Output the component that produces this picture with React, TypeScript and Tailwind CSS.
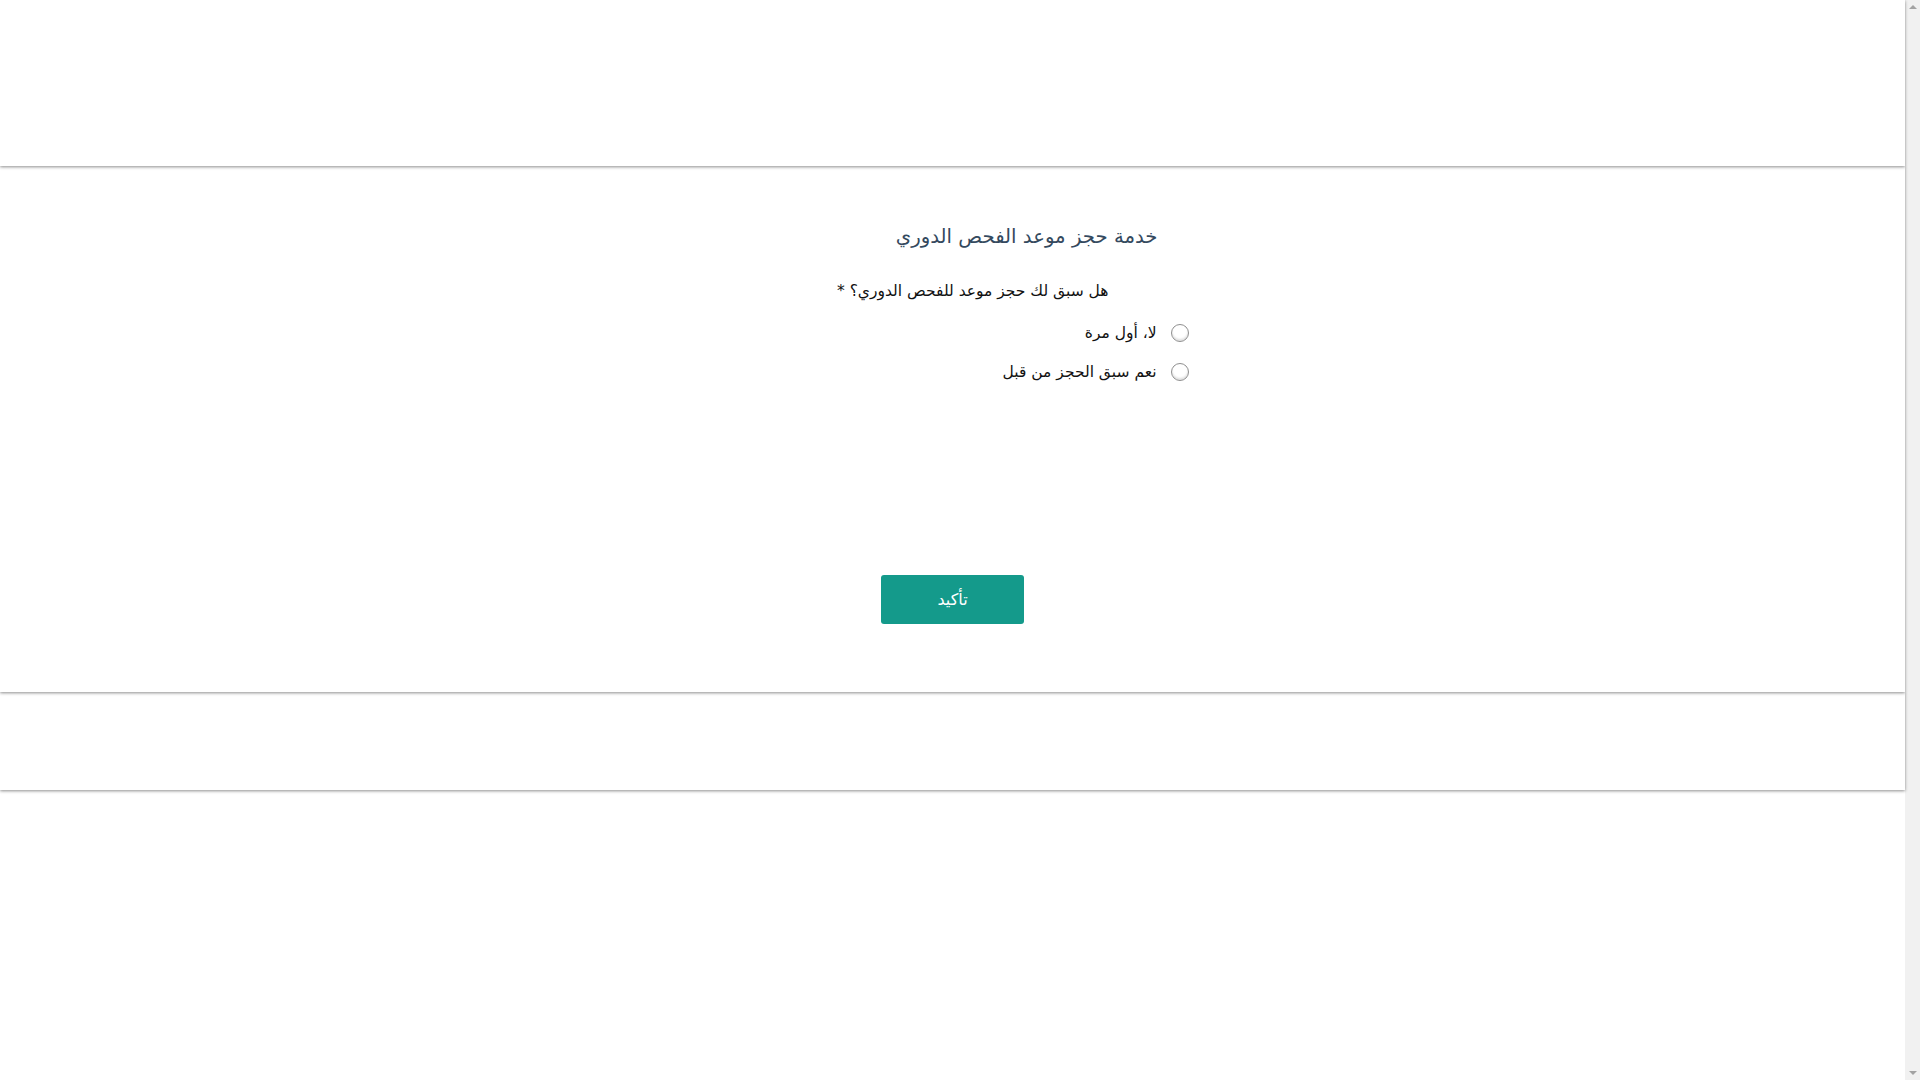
import React from "react";

function Radio() {
  return (
    <span className="inline-block w-[18px] h-[18px] rounded-full border-[1.5px] border-[#8f8f8f] bg-white shadow-[inset_0_-2px_2px_rgba(0,0,0,0.12)] shrink-0" />
  );
}

export default function App() {
  const font = { fontFamily: '"DejaVu Sans", "Noto Sans", sans-serif' };
  return (
    <div className="flex w-full h-[1080px] bg-white overflow-hidden" style={font}>
      <div className="flex-1 flex flex-col min-w-0">
        <header className="h-[166px] shrink-0 bg-white shadow-[0_1px_3px_rgba(0,0,0,0.45)] relative z-20" />
        <main className="h-[526px] shrink-0 bg-white shadow-[0_1px_3px_rgba(0,0,0,0.45)] relative z-10" dir="rtl">
          <div className="w-[476px] mx-auto flex flex-col">
            <h1 className="mt-[57px] pr-[33px] text-[19.7px] leading-[28px] text-[#34495e] font-normal">
              خدمة حجز موعد الفحص الدوري
            </h1>
            <p className="mt-[29px] pr-[82px] text-[15.5px] leading-[22px] text-[#111]">
              هل سبق لك حجز موعد للفحص الدوري؟ *
            </p>
            <label className="mt-[20px] pr-[2px] flex items-center gap-[14px] text-[15.5px] leading-[22px] text-[#111]">
              <Radio />
              <span>لا، أول مرة</span>
            </label>
            <label className="mt-[17px] pr-[2px] flex items-center gap-[14px] text-[15.5px] leading-[22px] text-[#111]">
              <Radio />
              <span>نعم سبق الحجز من قبل</span>
            </label>
            <div className="mt-[192px] flex justify-center">
              <button className="w-[143px] h-[49px] rounded-[3px] bg-[#149a8b] text-white text-[16px]">
                تأكيد
              </button>
            </div>
          </div>
        </main>
        <footer className="h-[98px] shrink-0 bg-white shadow-[0_1px_3px_rgba(0,0,0,0.45)] relative z-0" />
        <div className="flex-1 bg-white" />
      </div>
      <div className="w-[15px] shrink-0 bg-[#f1f1f1] flex flex-col items-center justify-between py-[5px]">
        <span className="w-0 h-0 border-l-[4px] border-r-[4px] border-b-[4px] border-l-transparent border-r-transparent border-b-[#a3a3a3]" />
        <span className="w-0 h-0 border-l-[4px] border-r-[4px] border-t-[4px] border-l-transparent border-r-transparent border-t-[#a3a3a3]" />
      </div>
    </div>
  );
}
